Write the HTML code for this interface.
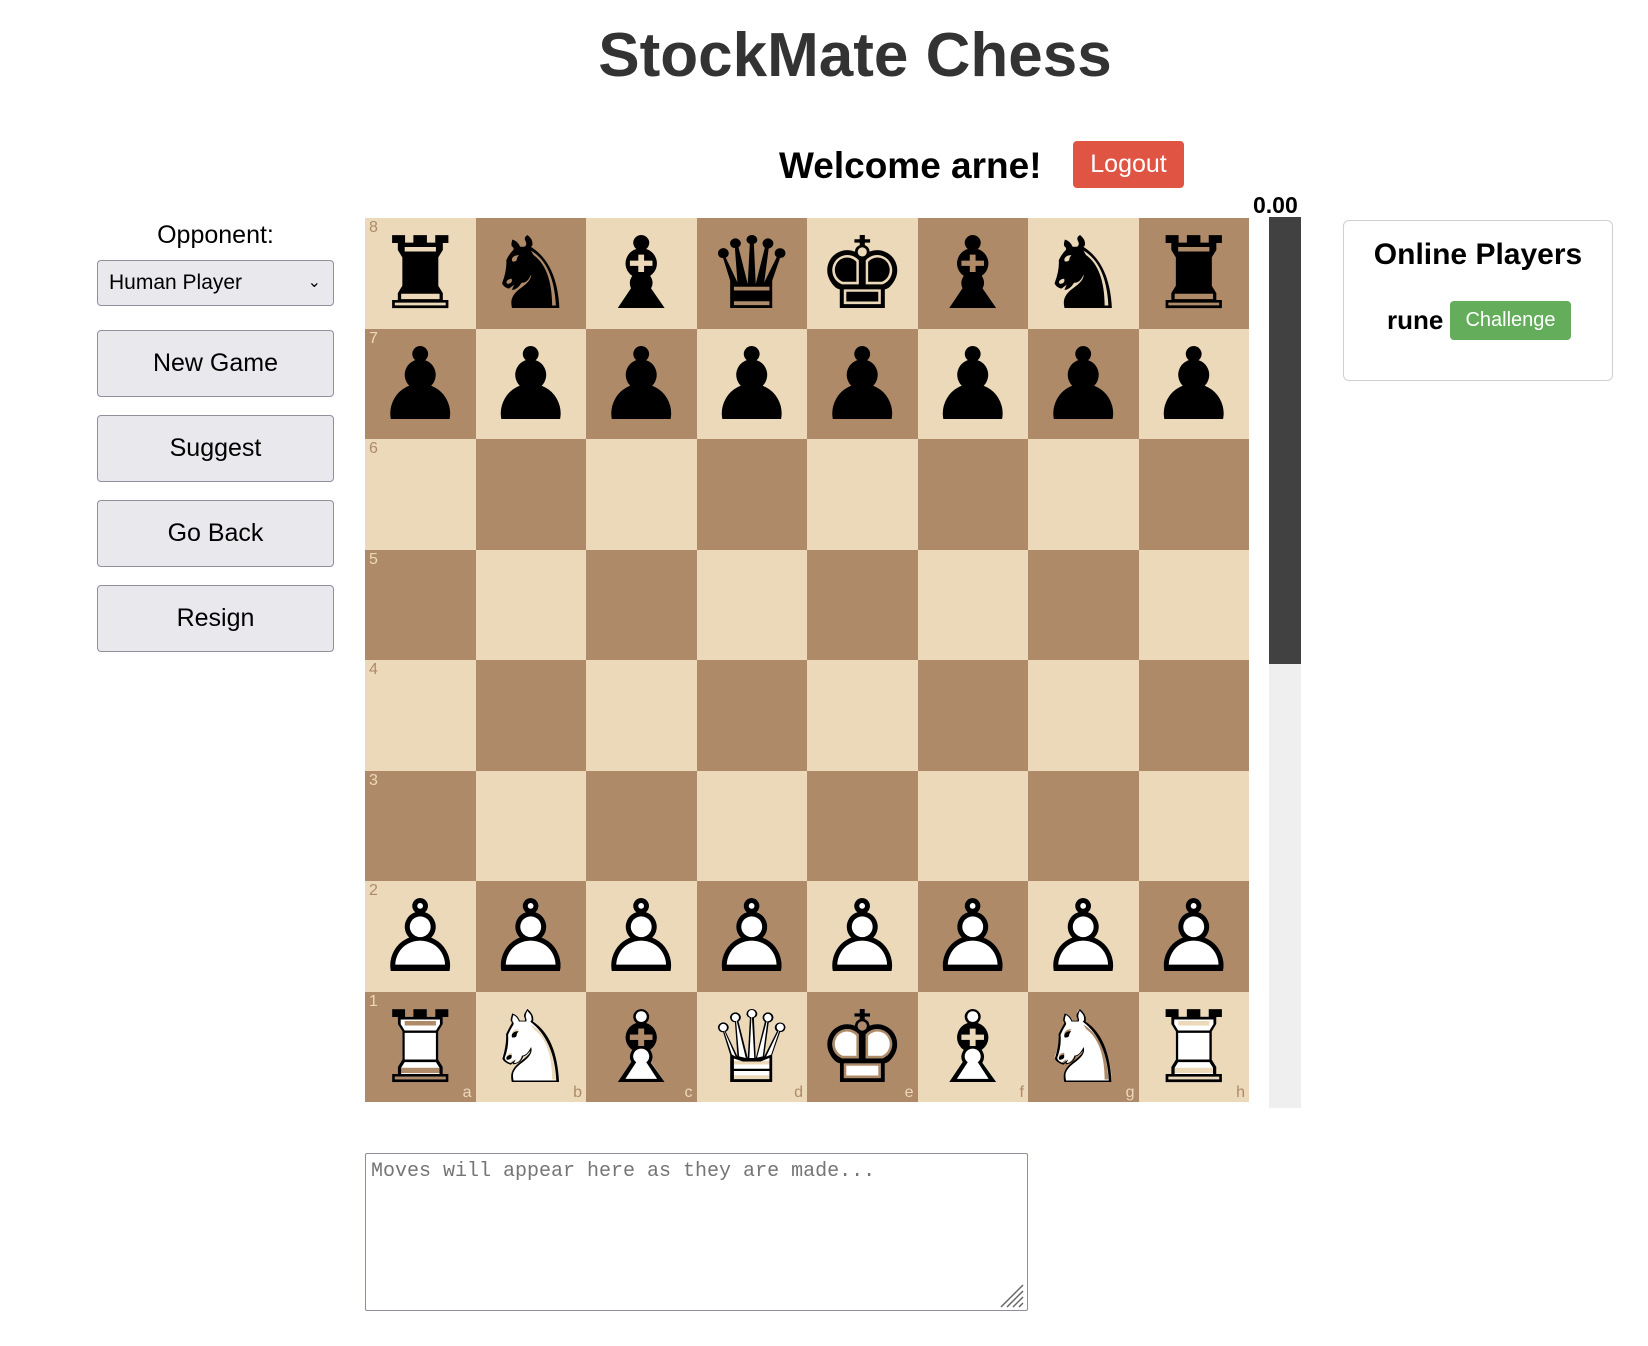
<!DOCTYPE html>
<html><head><meta charset="utf-8">
<style>
body{margin:0;width:1648px;height:1346px;background:#fff;font-family:"Liberation Sans",sans-serif;position:relative;overflow:hidden}
.a{position:absolute}
h1{position:absolute;left:0;width:1710px;top:20px;margin:0;text-align:center;font-size:62px;font-weight:bold;color:#333}
.btn{position:absolute;left:97px;width:237px;height:67px;box-sizing:border-box;background:#e9e9ed;border:1px solid #8f8f9d;border-radius:4px;font-size:25px;display:flex;align-items:center;justify-content:center;color:#000}
#board{position:absolute;left:365px;top:218px;width:884px;height:884px;display:grid;grid-template-columns:repeat(8,110.5px);grid-template-rows:repeat(8,110.5px)}
.sq{position:relative;font-family:"DejaVu Sans",sans-serif;line-height:1;color:#000}
.pc{position:absolute;left:0;right:0;top:6px;text-align:center;font-size:100px;line-height:100px}
.wf{color:#fff}
.l{background:#ecd9b9}.d{background:#ae8a68}
.r{position:absolute;left:4px;top:2px;font-size:16px;font-family:"Liberation Sans",sans-serif}
.f{position:absolute;right:4px;bottom:1px;font-size:16px;font-family:"Liberation Sans",sans-serif}
.l .r,.l .f{color:#ae8a68}.d .r,.d .f{color:#ecd9b9}
</style></head><body>
<h1>StockMate Chess</h1>
<div class="a" style="left:779px;top:145px;font-size:37px;font-weight:bold;color:#000">Welcome arne!</div>
<div class="a" style="left:1073px;top:141px;width:111px;height:47px;background:#e05443;border-radius:4px;color:#fff;font-size:25px;display:flex;align-items:center;justify-content:center">Logout</div>
<div class="a" style="left:97px;width:237px;top:221px;text-align:center;font-size:25px">Opponent:</div>
<div class="a" style="left:97px;top:260px;width:237px;height:46px;box-sizing:border-box;background:#e9e9ed;border:1px solid #8f8f9d;border-radius:4px;font-size:21px;padding-left:11px;line-height:44px">Human Player<span style="position:absolute;right:12px;top:0;font-size:16px">&#x2304;</span></div>
<div class="btn" style="top:330px">New Game</div>
<div class="btn" style="top:415px">Suggest</div>
<div class="btn" style="top:500px">Go Back</div>
<div class="btn" style="top:585px">Resign</div>
<div id="board"></div>
<div class="a" style="left:1253px;top:192px;font-size:23px;font-weight:bold">0.00</div>
<div class="a" style="left:1269px;top:217px;width:32px;height:447px;background:#414141"></div>
<div class="a" style="left:1269px;top:664px;width:32px;height:444px;background:#efefef"></div>
<div class="a" style="left:1343px;top:220px;width:270px;height:161px;box-sizing:border-box;border:1px solid #d0d0d0;border-radius:6px"></div>
<div class="a" style="left:1343px;width:270px;top:238px;text-align:center;font-size:30px;font-weight:bold">Online Players</div>
<div class="a" style="left:1387px;top:305px;font-size:26px;font-weight:bold">rune</div>
<div class="a" style="left:1450px;top:301px;width:121px;height:39px;background:#63ad5b;border-radius:4px;color:#fff;font-size:20px;display:flex;align-items:center;justify-content:center">Challenge</div>
<div class="a" style="left:365px;top:1153px;width:663px;height:158px;box-sizing:border-box;border:1px solid #8f8f9d;border-radius:2px;font-family:'Liberation Mono',monospace;font-size:20px;color:#757575;padding:6px 5px">Moves will appear here as they are made...</div>
<svg class="a" style="left:997px;top:1281px" width="28" height="28"><g stroke="#666" stroke-width="1.5"><line x1="4" y1="26" x2="26" y2="4"/><line x1="10" y1="26" x2="26" y2="10"/><line x1="16" y1="26" x2="26" y2="16"/><line x1="22" y1="26" x2="26" y2="22"/></g></svg>
<script>
var b=document.getElementById('board');
var black='♜♞♝♛♚♝♞♜',white='♖♘♗♕♔♗♘♖';
var files='abcdefgh';
for(var r=8;r>=1;r--)for(var c=0;c<8;c++){
var d=document.createElement('div');
d.className='sq '+(((r+c)%2==0)?'l':'d');
var h='';
if(r==8)h='<span class="pc">'+[...black][c]+'</span>';
if(r==7)h='<span class="pc">♟</span>';
if(r==2)h='<span class="pc wf">♟</span><span class="pc">♙</span>';
if(r==1)h='<span class="pc wf">'+[...black][c]+'</span><span class="pc">'+[...white][c]+'</span>';
if(c==0)h+='<span class="r">'+r+'</span>';
if(r==1)h+='<span class="f">'+files[c]+'</span>';
d.innerHTML=h;b.appendChild(d);}
</script>
</body></html>
